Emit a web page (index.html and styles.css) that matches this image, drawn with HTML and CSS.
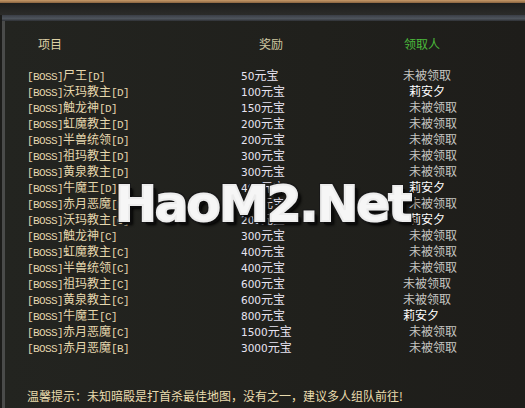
FILE: index.html
```html
<!DOCTYPE html>
<html>
<head>
<meta charset="utf-8">
<link rel="stylesheet" href="styles.css">
</head>
<body>
<div class="screen">
  <div class="topline"></div>
  <div class="band1"></div>
  <div class="band2"></div>
  <div class="panel">
    <div class="table">
      <div class="row head">
        <span class="c1 h1">项目</span>
        <span class="c2 h2">奖励</span>
        <span class="c3 h3">领取人</span>
      </div>
      <div class="rows">
        <div class="row"><span class="c1"><i>[BOSS]</i>尸王<i>[D]</i></span><span class="c2"><i>50</i>元宝</span><span class="c3 st">未被领取</span></div>
        <div class="row"><span class="c1"><i>[BOSS]</i>沃玛教主<i>[D]</i></span><span class="c2"><i>100</i>元宝</span><span class="c3 in nm">莉安夕</span></div>
        <div class="row"><span class="c1"><i>[BOSS]</i>触龙神<i>[D]</i></span><span class="c2"><i>150</i>元宝</span><span class="c3 in st">未被领取</span></div>
        <div class="row"><span class="c1"><i>[BOSS]</i>虹魔教主<i>[D]</i></span><span class="c2"><i>200</i>元宝</span><span class="c3 in st">未被领取</span></div>
        <div class="row"><span class="c1"><i>[BOSS]</i>半兽统领<i>[D]</i></span><span class="c2"><i>200</i>元宝</span><span class="c3 in st">未被领取</span></div>
        <div class="row"><span class="c1"><i>[BOSS]</i>祖玛教主<i>[D]</i></span><span class="c2"><i>300</i>元宝</span><span class="c3 in st">未被领取</span></div>
        <div class="row"><span class="c1"><i>[BOSS]</i>黄泉教主<i>[D]</i></span><span class="c2"><i>300</i>元宝</span><span class="c3 in st">未被领取</span></div>
        <div class="row"><span class="c1"><i>[BOSS]</i>牛魔王<i>[D]</i></span><span class="c2"><i>400</i>元宝</span><span class="c3 in nm">莉安夕</span></div>
        <div class="row"><span class="c1"><i>[BOSS]</i>赤月恶魔<i>[D]</i></span><span class="c2"><i>500</i>元宝</span><span class="c3 in st">未被领取</span></div>
        <div class="row"><span class="c1"><i>[BOSS]</i>沃玛教主<i>[C]</i></span><span class="c2"><i>200</i>元宝</span><span class="c3 in nm">莉安夕</span></div>
        <div class="row"><span class="c1"><i>[BOSS]</i>触龙神<i>[C]</i></span><span class="c2"><i>300</i>元宝</span><span class="c3 in st">未被领取</span></div>
        <div class="row"><span class="c1"><i>[BOSS]</i>虹魔教主<i>[C]</i></span><span class="c2"><i>400</i>元宝</span><span class="c3 in st">未被领取</span></div>
        <div class="row"><span class="c1"><i>[BOSS]</i>半兽统领<i>[C]</i></span><span class="c2"><i>400</i>元宝</span><span class="c3 in st">未被领取</span></div>
        <div class="row"><span class="c1"><i>[BOSS]</i>祖玛教主<i>[C]</i></span><span class="c2"><i>600</i>元宝</span><span class="c3 st">未被领取</span></div>
        <div class="row"><span class="c1"><i>[BOSS]</i>黄泉教主<i>[C]</i></span><span class="c2"><i>600</i>元宝</span><span class="c3 st">未被领取</span></div>
        <div class="row"><span class="c1"><i>[BOSS]</i>牛魔王<i>[C]</i></span><span class="c2"><i>800</i>元宝</span><span class="c3 nm">莉安夕</span></div>
        <div class="row"><span class="c1"><i>[BOSS]</i>赤月恶魔<i>[C]</i></span><span class="c2"><i>1500</i>元宝</span><span class="c3 in st">未被领取</span></div>
        <div class="row"><span class="c1"><i>[BOSS]</i>赤月恶魔<i>[B]</i></span><span class="c2"><i>3000</i>元宝</span><span class="c3 in st">未被领取</span></div>
      </div>
    </div>
    <div class="tip">温馨提示：未知暗殿是打首杀最佳地图，没有之一，建议多人组队前往!</div>
    <div class="watermark">HaoM2.Net</div>
  </div>
</div>
</body>
</html>
```

FILE: styles.css
```css
* { box-sizing: border-box; }
html, body {
  margin: 0;
  padding: 0;
  width: 525px;
  height: 408px;
  overflow: hidden;
  background: #1c1c1a;
}
.screen {
  width: 525px;
  height: 408px;
  display: flex;
  flex-direction: column;
  font-family: "Noto Sans CJK SC", "DejaVu Sans", sans-serif;
  font-size: 12px;
}
.topline {
  height: 3px;
  background: linear-gradient(#c89a68, #8a6440);
}
.band1 {
  height: 12px;
  background: linear-gradient(#1f1f1d, #2c2c2a);
}
.band2 {
  height: 6px;
  margin-left: 2px;
  background: linear-gradient(#3a3e46, #4e545c 60%, #2e3034);
}
.panel {
  position: relative;
  flex: 1;
  margin-left: 2px;
  border-left: 3px solid #4a4b4a;
  background: linear-gradient(90deg, #232420, #20201c 60%, #1e1d1a);
  padding: 15px 0 0 22px;
}
.table {
  display: flex;
  flex-direction: column;
  gap: 15px;
}
.rows {
  display: flex;
  flex-direction: column;
}
.row {
  display: grid;
  grid-template-columns: 214px 162px 1fr;
  height: 16px;
  line-height: 16px;
  white-space: nowrap;
}
.row span { display: block; }
.row i {
  font-style: normal;
  font-family: "Liberation Mono", monospace;
  font-size: 11px;
  letter-spacing: -0.6px;
}
.c1 { color: #e6d8ae; }
.c2 { color: #e8e4f2; }
.c2 i { font-family: "DejaVu Sans", sans-serif; font-size: 10.5px; letter-spacing: 0; }
.st { color: #c6c6c2; }
.nm { color: #ffffff; }
.in { padding-left: 6px; }
.head .h1 { padding-left: 11px; color: #ddd0a4; }
.head .h2 { padding-left: 18px; color: #cfc7a0; }
.head .h3 { padding-left: 1px; color: #4cba3c; }
.tip {
  margin-top: 33px;
  line-height: 16px;
  color: #eadcae;
  white-space: nowrap;
}
.watermark {
  position: absolute;
  left: 110px;
  top: 157px;
  font-family: "DejaVu Sans", sans-serif;
  font-weight: bold;
  font-size: 50px;
  line-height: 52px;
  letter-spacing: -2px;
  color: #f6f6f6;
  -webkit-text-stroke: 2px #ececec;
  text-shadow: 3px 3px 0 #0c0c0c, -2px -2px 0 #1a1a1a, 2px -2px 0 #1a1a1a, -2px 2px 0 #1a1a1a, 4px 4px 3px #000;
}
```
